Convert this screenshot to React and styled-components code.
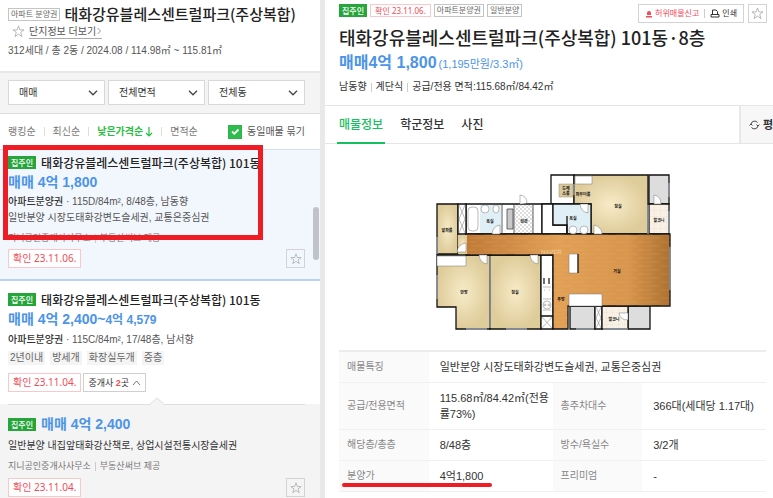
import React, { useState } from 'react'
import styled, { createGlobalStyle } from 'styled-components'

const GlobalStyle = createGlobalStyle`
  * {
    box-sizing: border-box;
  }

  body {
    margin: 0;
    overflow: hidden;
    color: #333;
    background: #fff;
    font-family: 'Liberation Sans', 'Noto Sans CJK KR', sans-serif;
    font-size: 11px;
    line-height: 16px;
  }

  button, select {
    font: inherit;
    color: inherit;
    margin: 0;
    cursor: pointer;
  }

  a {
    color: inherit;
    text-decoration: none;
  }

  h1, h2, h3, p, ul {
    margin: 0;
    padding: 0;
  }
`

const Page = styled.div`
  display: grid;
  grid-template-columns: 320px minmax(0, 1fr);
  height: 100vh;
`

const ListPane = styled.aside`
  position: relative;
  overflow: hidden;
`

const DetailPane = styled.main`
  overflow: hidden;
  border-left: 5px solid #e9e9ea;
`

const ComplexHeader = styled.header`
  padding: 5px 8px 12px;
`

const TitleRow = styled.div`
  display: flex;
  align-items: center;
  gap: 4px;
`

const ComplexTitle = styled.h1`
  font-family: 'Noto Sans CJK KR', sans-serif;
  font-size: 15px;
  line-height: 18px;
  font-weight: 500;
  color: #222;
  white-space: nowrap;
`

const LinkRow = styled.div`
  display: flex;
  align-items: center;
  gap: 4px;
  padding-left: 4px;
  height: 17px;
`

const PlainButton = styled.button`
  display: flex;
  padding: 0;
  border: 0;
  background: none;
`

const MoreLink = styled.a`
  display: flex;
  align-items: center;
  font-size: 10px;
  line-height: 13px;
  color: #555;
  border-bottom: 1px solid #aaa;
`

const Summary = styled.p`
  margin-top: 3px;
  font-size: 10px;
  line-height: 16px;
  color: #555;
`

const Filters = styled.div`
  display: grid;
  grid-template-columns: repeat(3, 1fr);
  gap: 3px;
  padding: 7px 15px 8px 8px;
  background: #f4f4f4;
  border-top: 2px solid #e8e8e8;
  border-bottom: 1px solid #dedede;
`

const SelectBox = styled.label`
  display: grid;
  align-items: center;

  > * {
    grid-area: 1 / 1;
  }

  svg {
    justify-self: end;
    margin-right: 7px;
    pointer-events: none;
  }
`

const Select = styled.select`
  appearance: none;
  width: 100%;
  height: 25px;
  padding: 0 20px 0 10px;
  font-size: 10px;
  color: #333;
  background: #fff;
  border: 1px solid #d8d8d8;
  border-radius: 0;
`

const SortRow = styled.div`
  display: flex;
  align-items: center;
  justify-content: space-between;
  height: 35px;
  padding: 0 15px 0 8px;
  font-size: 10px;
  color: #777;
`

const SortList = styled.ul`
  display: flex;
  list-style: none;

  li + li::before {
    content: '';
    width: 1px;
    height: 9px;
    margin: 0 8px;
    background: #ddd;
  }

  li {
    display: flex;
    align-items: center;
  }
`

const SortButton = styled.button`
  display: flex;
  align-items: center;
  gap: 2px;
  padding: 0;
  border: 0;
  background: none;
  color: ${props => props.$active ? '#1fc13c' : '#777'};
  font-weight: ${props => props.$active ? 700 : 400};
`

const CheckLabel = styled.label`
  display: flex;
  align-items: center;
  gap: 5px;
  color: #555;
`

const CheckBox = styled.span`
  display: grid;
  width: 14px;
  height: 14px;

  > * {
    grid-area: 1 / 1;
    margin: 0;
  }

  svg {
    pointer-events: none;
  }
`

const Check = styled.input`
  appearance: none;
  width: 14px;
  height: 14px;
  border: 1px solid #2cb549;
  background: ${props => props.checked ? '#2fbb4d' : '#fff'};
`

const Card = styled.article`
  position: relative;
  padding: ${props => props.$selected ? '4px 15px 11px 8px' : '10px 15px 12px 8px'};
  background: ${props => props.$selected ? '#f2f7fe' : '#fff'};
  border-top: ${props => props.$selected ? '1px solid #d5dfec' : '0'};
  border-bottom: ${props => props.$selected ? '2px solid #b9d3ee' : '0'};
`

const SubCard = styled.article`
  position: relative;
  padding: 12px 15px 8px 8px;
  background: #f4f4f4;

  &::before {
    content: '';
    position: absolute;
    top: 0;
    left: 8px;
    right: 15px;
    height: 1px;
    background: #dedede;
  }

  > svg {
    position: absolute;
    top: -7px;
    left: 149px;
  }
`

const CardTitle = styled.h2`
  display: flex;
  align-items: center;
  gap: 5px;
  height: 17px;
  font-family: 'Noto Sans CJK KR', sans-serif;
  font-size: 12px;
  font-weight: 500;
  color: #222;
  white-space: nowrap;
`

const Price = styled.strong`
  display: block;
  font-family: 'Liberation Sans', 'Noto Sans CJK KR', sans-serif;
  font-size: 14px;
  line-height: 23px;
  font-weight: 700;
  color: #4c94e8;

  small {
    font-size: 12px;
  }
`

const Meta = styled.p`
  font-size: 10px;
  line-height: 16px;
  color: #555;
  white-space: nowrap;

  b {
    font-weight: 500;
    color: #333;
  }
`

const Description = styled(Meta)`
  margin-top: 5px;
  color: #333;
`

const Agent = styled.p`
  display: flex;
  align-items: center;
  gap: 4px;
  margin-top: 4px;
  font-size: 9px;
  line-height: 16px;
  color: #777;
`

const Bar = styled.i`
  width: 1px;
  height: 9px;
  background: #ccc;
`

const CardFooter = styled.div`
  display: flex;
  gap: 2px;
  margin-top: ${props => props.$gap || 4}px;
`

const OwnerBadge = styled.span`
  padding: 0 3px;
  font-family: 'Noto Sans CJK KR', sans-serif;
  font-size: 8px;
  line-height: 13px;
  font-weight: 500;
  color: #fff;
  background: #26a63a;
`

const TypeBadge = styled.span`
  padding: 0 2px;
  font-size: 8px;
  line-height: 11px;
  color: #666;
  border: 1px solid #c4c4c4;
  white-space: nowrap;
`

const Confirm = styled.span`
  padding: 0 4px;
  font-family: 'Noto Sans', 'Noto Sans CJK KR', sans-serif;
  font-size: ${props => props.$small ? 8 : 10}px;
  line-height: ${props => props.$small ? 11 : 17}px;
  font-weight: 400;
  color: #f34c59;
  background: #fff;
  border: 1px solid #fac7cb;
  white-space: nowrap;
`

const IconBox = styled.button`
  display: flex;
  align-items: center;
  justify-content: center;
  width: 19px;
  height: 19px;
  margin-left: ${props => props.$push ? 'auto' : '0'};
  padding: 0;
  background: ${props => props.$push ? 'transparent' : '#fff'};
  border: 1px solid #d3d3d3;
`

const AgentsButton = styled.button`
  display: flex;
  align-items: center;
  gap: 3px;
  height: 19px;
  padding: 0 4px;
  font-size: 9px;
  background: #fff;
  border: 1px solid #cfcfcf;

  b {
    color: #f34c59;
  }
`

const Tags = styled.div`
  display: flex;
  gap: 5px;
  margin-top: 3px;
`

const Tag = styled.span`
  padding: 0 2px;
  font-size: 10px;
  line-height: 14px;
  color: #666;
  background: #f4f4f4;
`

const RedFrame = styled.div`
  position: absolute;
  top: -5px;
  left: 3px;
  width: 260px;
  height: 95px;
  border: 5px solid #ee1c25;
  pointer-events: none;
`

const ScrollThumb = styled.div`
  position: absolute;
  top: 207px;
  right: 1px;
  width: 6px;
  height: 53px;
  border-radius: 3px;
  background: #c0c4ca;
`

const DetailHeader = styled.header`
  padding: 4px 6px 10px 14px;
`

const BadgeRow = styled.div`
  display: flex;
  align-items: flex-start;
  gap: 3px;
  height: 19px;
`

const Actions = styled.div`
  display: flex;
  gap: 4px;
  margin-left: auto;
`

const ActionGroup = styled.div`
  display: flex;
  align-items: center;
  gap: 5px;
  height: 19px;
  padding: 0 6px;
  border: 1px solid #d3d3d3;
`

const ActionButton = styled(PlainButton)`
  align-items: center;
  gap: 2px;
  font-size: 8px;
  color: ${props => props.$alert ? '#f34c59' : '#333'};
  white-space: nowrap;
`

const DetailTitle = styled.h2`
  margin: 1px 0;
  font-family: 'Noto Sans CJK KR', sans-serif;
  font-size: 18px;
  line-height: 26px;
  font-weight: 500;
  color: #222;
  white-space: nowrap;
`

const DetailPrice = styled.p`
  font-size: 11px;
  line-height: 24px;
  color: #4c94e8;

  strong {
    margin-right: 2px;
    font-size: 16px;
  }
`

const Facts = styled.p`
  display: flex;
  align-items: center;
  gap: 4px;
  margin-top: 3px;
  font-size: 10px;
  line-height: 16px;
  color: #333;
`

const TabBar = styled.nav`
  display: flex;
  height: 39px;
  padding-left: 12px;
  border-top: 1px solid #e5e5e5;
  border-bottom: 1px solid #e5e5e5;
`

const Tab = styled.button`
  height: 38px;
  margin-right: 13px;
  padding: 0 2px;
  font-family: 'Noto Sans CJK KR', sans-serif;
  font-size: 12px;
  font-weight: 500;
  color: ${props => props.$active ? '#16c060' : '#333'};
  background: none;
  border: 0;
  border-bottom: 2px solid ${props => props.$active ? '#16c060' : 'transparent'};
`

const UnitToggle = styled.button`
  display: flex;
  align-items: center;
  gap: 3px;
  width: 34px;
  margin-left: auto;
  padding: 0 0 0 8px;
  overflow: hidden;
  font-size: 11px;
  font-weight: 700;
  background: #f7f7f7;
  border: 0;
  border-left: 2px solid #e8e8e8;
  white-space: nowrap;

  svg {
    flex: none;
  }
`

const PlanFigure = styled.figure`
  display: flex;
  justify-content: center;
  margin: 0;
  padding: 30px 0 18px 8px;
`

const Details = styled.table`
  width: calc(100% - 21px);
  margin-left: 14px;
  table-layout: fixed;
  border-collapse: collapse;
  border-top: 2px solid #ececec;

  tr {
    height: 31px;
    border-bottom: 1px solid #f0f0f0;
  }

  th {
    padding: 0 8px;
    font-size: 10px;
    font-weight: 400;
    text-align: left;
    color: #888;
    background: #fafafa;
  }

  td {
    padding: 7px 0 7px 11px;
    font-size: 11px;
    line-height: 16px;
    word-break: break-all;
  }
`

const LabelCol = styled.col`
  width: 21%;
`

const Marked = styled.span`
  position: relative;

  &::after {
    content: '';
    position: absolute;
    top: 13px;
    left: -5px;
    width: 150px;
    height: 4px;
    border-radius: 2px;
    background: #ee1c25;
  }
`

const Star = ({ size = 14 }) => (
  <svg width={size} height={size} viewBox='0 0 14 14' fill='none' stroke='#aaa' strokeWidth='0.9'>
    <path d='M7 1l1.500 4.300H13L9.400 8l1.400 4.500L7 9.800l-3.800 2.700L4.600 8 1 5.300h4.500z' />
  </svg>
)

const Chevron = () => (
  <svg width='10' height='6' viewBox='0 0 10 6' fill='none' stroke='#444' strokeWidth='1.3'>
    <path d='M1 0.800l4 4 4-4' />
  </svg>
)

const StarBox = () => (
  <IconBox $push aria-label='관심매물'><Star size={12} /></IconBox>
)

const filters = ['매매', '전체면적', '전체동']
const sorts = ['랭킹순', '최신순', '낮은가격순', '면적순']
const tabs = ['매물정보', '학군정보', '사진']
const tags = ['2년이내', '방세개', '화장실두개', '중층']
const complexName = '태화강유블레스센트럴파크(주상복합)'

const rooms = [
  ['안방', 464, 292], ['침실', 515, 292], ['욕실', 490, 221], ['현관', 524, 221],
  ['알파룸', 447, 230], ['드레', 566, 188], ['스룸', 566, 193], ['파우더룸', 583, 194],
  ['침실', 618, 206], ['욕실', 573, 218], ['발코니', 659, 220], ['거실', 617, 271],
  ['주방', 561, 299], ['발코니', 614, 319]
]

const FloorPlan = () => (
  <svg width='236' height='158' viewBox='435 174 236 158' role='img' aria-label='평면도'>
    <defs>
      <radialGradient id='room'>
        <stop offset='0' stopColor='#f7ebc7' />
        <stop offset='1' stopColor='#dfcc9b' />
      </radialGradient>
      <linearGradient id='wood' x2='1'>
        <stop offset='0' stopColor='#c07a38' />
        <stop offset='.45' stopColor='#e2a057' />
        <stop offset='.8' stopColor='#d7954d' />
        <stop offset='1' stopColor='#ad7131' />
      </linearGradient>
      <pattern id='planks' width='22' height='8' patternUnits='userSpaceOnUse'>
        <path d='M0 2h14M8 6h14' stroke='#f0b670' strokeWidth='.6' opacity='.3' />
      </pattern>
      <pattern id='tiles' width='4' height='4' patternUnits='userSpaceOnUse'>
        <rect width='4' height='4' fill='#fff' />
        <path d='M0 0h2v2H0zM2 2h2v2H2z' fill='#ddd' />
      </pattern>
      <pattern id='balcony' width='6' height='6' patternUnits='userSpaceOnUse'>
        <rect width='6' height='6' fill='#faf1e6' />
        <path d='M0 0h6M0 0v6' stroke='#e6d9cb' strokeWidth='.6' />
      </pattern>
    </defs>

    <g stroke='#111' strokeWidth='1.300'>
      <path d='M437 204h21v50h-21z' fill='url(#room)' />
      <path d='M466 204h76v30h-76zM542 204h12v30h-12z' fill='#fff' />
      <path d='M551 175h23v29h-23z' fill='#fff' />
      <path d='M574 175h74v59h-57v-30h-17z' fill='url(#room)' />
      <path d='M649 175h20v29h-20z' fill='#ddd' />
      <path d='M649 204h20v30h-20z' fill='url(#balcony)' />
      <path d='M542 204h11v21h14v9h-25z' fill='#fff' />
      <path d='M553 204h38v30h-24v-9h-14z' fill='#e0eef6' />
      <path d='M458 204h8v30h-8z' fill='#fff' />
      <path d='M437 255h53v74h-34v-22h-19z' fill='url(#room)' />
      <path d='M490 255h51v74h-51z' fill='url(#room)' />
      <path d='M541 255h12v74h-12z' fill='#fff' />
      <path d='M570 306h25v23h-25zM628 306h22v23h-22z' fill='#ddd' />
      <path d='M595 306h7v23h-7z' fill='#fff' />
      <path d='M602 306h26v23h-26z' fill='url(#balcony)' />
      <path d='M466 234h204v72H568v23h-15v-74h-87z' fill='url(#wood)' />
      <path d='M541 316h12M567 216v18' />
    </g>
    <path d='M458 235h9v19h-9z' fill='url(#room)' />
    <path d='M466 234h204v72H568v23h-15v-74h-87z' fill='url(#planks)' />
    <path d='M480 205h21v28h-21z' fill='#e0eef6' />
    <path d='M515 205h18v28h-18z' fill='url(#tiles)' />
    <path d='M559 184h14v13h-14z' fill='#dac99d' stroke='#9c8b68' strokeWidth='.5' />
    <g fill='#fff' stroke='#777' strokeWidth='.5'>
      <rect x='468' y='207' width='10' height='24' rx='4' />
      <path d='M437 256h29v10h-29zM575 176h17v8h-17zM569 254h9v19h-9zM569 294h33v12h-33z' />
      <circle cx='485' cy='209' r='4' />
      <ellipse cx='496' cy='209' rx='3' ry='4' />
      <circle cx='573' cy='230' r='4' />
      <ellipse cx='584' cy='230' rx='4' ry='4' />
      <circle cx='547' cy='305' r='4' />
      <circle cx='545' cy='305' r='1' />
      <circle cx='549' cy='305' r='1' />
      <path d='M543 299h8M543 310h8M543 287h8M544 290h1M549 290h1' />
      <path d='M500 225v9h-8q1-8 8-9zM466 243v9h-9q1-8 9-9zM479 255h8v9q-7-1-8-9zM530 255h8v9q-7-1-8-9zM520 204v-9q7 1 7 8M580 204h8v9q-7-1-8-9zM594 234v-9q8 2 8 9zM654 204v-9q7 1 7 9zM628 320v-7h-9q1 7 9 7z' />
      <path d='M459 205l6 14-6 14M465 205l-6 14 6 14M542 317l10 11M552 317l-10 11M596 307l5 11-5 10M601 307l-5 11 5 10' />
    </g>
    <path d='M507 209h6v20h-6z' fill='#c9c9c9' stroke='#333' strokeWidth='.7' />
    <path d='M502 204v30M533 205v28M514 205v28' stroke='#333' strokeWidth='.8' />
    <path d='M544 278v6M549 278v6M578 254v19' stroke='#111' strokeWidth='1.200' />
    <path d='M490 256v72M437 237v17M437 275v24M466 329h21M506 329h21M576 329h18M603 329h25M670 247v43M669 183v14M669 211v22M574 184v11M648 205v29' stroke='#9aa2ad' strokeWidth='1.400' />
    <text x='541' y='254' fill='#f8d3a0' opacity='.7' fontSize='6' fontWeight='700'>NAVER</text>
    <g fontSize='4' fontWeight='700' textAnchor='middle' fill='#111'>
      {rooms.map(([name, x, y]) => (
        <text key={`${x}-${y}`} x={x} y={y + 2}>{name}</text>
      ))}
    </g>
  </svg>
)

const ListingPane = () => {
  const [sort, setSort] = useState('낮은가격순')
  const [grouped, setGrouped] = useState(true)

  return (
    <ListPane>
      <ComplexHeader>
        <TitleRow>
          <TypeBadge>아파트 분양권</TypeBadge>
          <ComplexTitle>{complexName}</ComplexTitle>
        </TitleRow>
        <LinkRow>
          <PlainButton aria-label='관심단지'><Star size={13} /></PlainButton>
          <MoreLink href='#complex'>
            단지정보 더보기
            <svg width='6' height='8' viewBox='0 0 6 8' fill='none' stroke='#999'>
              <path d='M1.500 1l3 3-3 3' />
            </svg>
          </MoreLink>
        </LinkRow>
        <Summary>312세대 / 총 2동 / 2024.08 / 114.98㎡ ~ 115.81㎡</Summary>
      </ComplexHeader>

      <Filters>
        {filters.map(name => (
          <SelectBox key={name}>
            <Select aria-label={name}>
              <option>{name}</option>
            </Select>
            <Chevron />
          </SelectBox>
        ))}
      </Filters>

      <SortRow>
        <SortList>
          {sorts.map(name => (
            <li key={name}>
              <SortButton $active={name === sort} onClick={() => setSort(name)}>
                {name}
                {name === sort && (
                  <svg width='8' height='10' viewBox='0 0 8 10' fill='none' stroke='#1fc13c' strokeWidth='1.200'>
                    <path d='M4 0v9M1 6l3 3 3-3' />
                  </svg>
                )}
              </SortButton>
            </li>
          ))}
        </SortList>
        <CheckLabel>
          <CheckBox>
            <Check type='checkbox' checked={grouped} onChange={() => setGrouped(!grouped)} />
            <svg width='14' height='14' viewBox='0 0 14 14' fill='none' stroke='#fff' strokeWidth='1.800'>
              <path d='M4 6.500l2.300 2.300L10.500 4.500' />
            </svg>
          </CheckBox>
          동일매물 묶기
        </CheckLabel>
      </SortRow>

      <Card $selected>
        <CardTitle><OwnerBadge>집주인</OwnerBadge>{complexName} 101동</CardTitle>
        <Price>매매 4억 1,800</Price>
        <Meta><b>아파트분양권</b> · 115D/84m², 8/48층, 남동향</Meta>
        <Meta>일반분양 시장도태화강변도슬세권, 교통은중심권</Meta>
        <Agent>지니공인중개사사무소<Bar />부동산써브 제공</Agent>
        <CardFooter $gap={3}>
          <Confirm>확인 23.11.06.</Confirm>
          <StarBox />
        </CardFooter>
        <RedFrame />
      </Card>

      <Card>
        <CardTitle><OwnerBadge>집주인</OwnerBadge>{complexName} 101동</CardTitle>
        <Price>매매 4억 2,400~<small>4억 4,579</small></Price>
        <Meta><b>아파트분양권</b> · 115C/84m², 17/48층, 남서향</Meta>
        <Tags>
          {tags.map(tag => <Tag key={tag}>{tag}</Tag>)}
        </Tags>
        <CardFooter $gap={8}>
          <Confirm>확인 23.11.04.</Confirm>
          <AgentsButton>
            <span>중개사 <b>2</b>곳</span>
            <svg width='9' height='6' viewBox='0 0 9 6' fill='none' stroke='#777'>
              <path d='M1 5l3.500-4L8 5' />
            </svg>
          </AgentsButton>
        </CardFooter>
      </Card>

      <SubCard>
        <svg width='16' height='8' viewBox='0 0 16 8'>
          <path d='M0 8l8-7 8 7' fill='#f4f4f4' stroke='#dedede' />
        </svg>
        <CardTitle><OwnerBadge>집주인</OwnerBadge><Price>매매 4억 2,400</Price></CardTitle>
        <Description>일반분양 내집앞태화강산책로, 상업시설전통시장슬세권</Description>
        <Agent>지니공인중개사사무소<Bar />부동산써브 제공</Agent>
        <CardFooter>
          <Confirm>확인 23.11.04.</Confirm>
          <StarBox />
        </CardFooter>
      </SubCard>
      <ScrollThumb />
    </ListPane>
  )
}

const DetailView = () => {
  const [tab, setTab] = useState('매물정보')

  return (
    <DetailPane>
      <DetailHeader>
        <BadgeRow>
          <OwnerBadge>집주인</OwnerBadge>
          <Confirm $small>확인 23.11.06.</Confirm>
          <TypeBadge>아파트분양권</TypeBadge>
          <TypeBadge>일반분양</TypeBadge>
          <Actions>
            <ActionGroup>
              <ActionButton $alert>
                <svg width='8' height='8' viewBox='0 0 8 8' fill='#f34c59'>
                  <path d='M2 5V3a2 2 0 0 1 4 0v2zM1 6h6v1.500H1z' />
                </svg>
                허위매물신고
              </ActionButton>
              <Bar />
              <ActionButton>
                <svg width='10' height='9' viewBox='0 0 10 9' fill='none' stroke='#333'>
                  <path d='M2.500 5V1h3.500l1.500 1.500V5M1 5.500h8v2.500H1z' />
                </svg>
                인쇄
              </ActionButton>
            </ActionGroup>
            <IconBox aria-label='관심매물'><Star size={13} /></IconBox>
          </Actions>
        </BadgeRow>
        <DetailTitle>{complexName} 101동·8층</DetailTitle>
        <DetailPrice><strong>매매4억 1,800</strong>(1,195만원/3.3㎡)</DetailPrice>
        <Facts>남동향<Bar />계단식<Bar />공급/전용 면적:115.68㎡/84.42㎡</Facts>
      </DetailHeader>

      <TabBar>
        {tabs.map(name => (
          <Tab key={name} $active={name === tab} onClick={() => setTab(name)}>{name}</Tab>
        ))}
        <UnitToggle>
          <svg width='11' height='10' viewBox='0 0 11 10' fill='none' stroke='#444'>
            <path d='M2 4a3.700 3.700 0 0 1 6.500-1.500M9 6a3.700 3.700 0 0 1-6.500 1.500M7.500 4.500L9 6l1.500-1.500M.5 5.500L2 4l1.500 1.500' />
          </svg>
          평
        </UnitToggle>
      </TabBar>

      <PlanFigure><FloorPlan /></PlanFigure>

      <Details>
        <colgroup>
          <LabelCol />
          <col />
          <LabelCol />
          <col />
        </colgroup>
        <tbody>
          <tr>
            <th>매물특징</th>
            <td colSpan='3'>일반분양 시장도태화강변도슬세권, 교통은중심권</td>
          </tr>
          <tr>
            <th>공급/전용면적</th>
            <td>115.68㎡/84.42㎡(전용률73%)</td>
            <th>총주차대수</th>
            <td>366대(세대당 1.17대)</td>
          </tr>
          <tr>
            <th>해당층/총층</th>
            <td>8/48층</td>
            <th>방수/욕실수</th>
            <td>3/2개</td>
          </tr>
          <tr>
            <th><Marked>분양가</Marked></th>
            <td>4억1,800</td>
            <th>프리미엄</th>
            <td>-</td>
          </tr>
        </tbody>
      </Details>
    </DetailPane>
  )
}

const App = () => (
  <>
    <GlobalStyle />
    <Page>
      <ListingPane />
      <DetailView />
    </Page>
  </>
)

export default App
